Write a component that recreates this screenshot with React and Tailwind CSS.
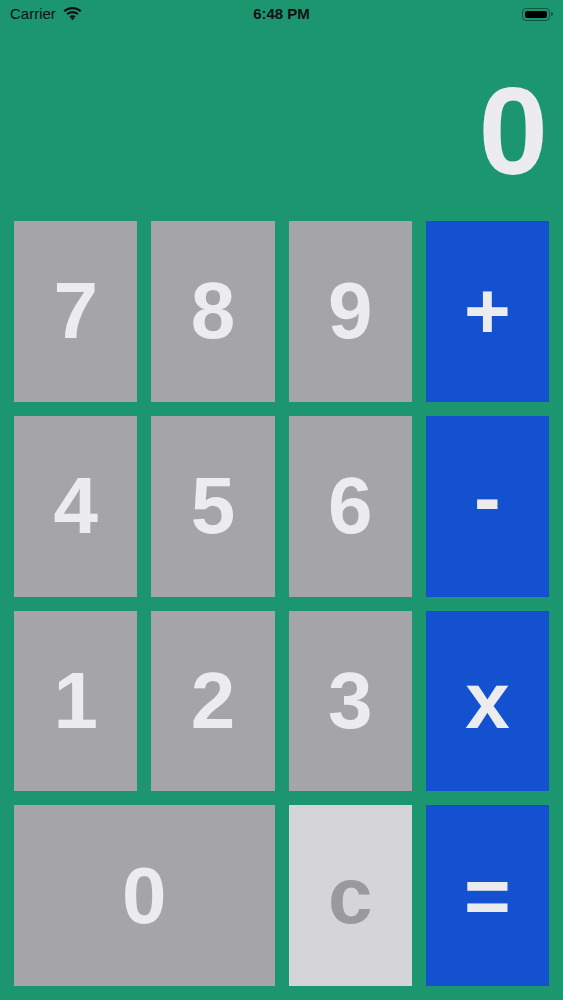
import React from 'react';

const FONT = { fontFamily: '"Liberation Sans", Arial, sans-serif' };

const KEYS = [
  { label: '7' }, { label: '8' }, { label: '9' }, { label: '+', op: true },
  { label: '4' }, { label: '5' }, { label: '6' }, { label: '-', op: true, lift: true },
  { label: '1' }, { label: '2' }, { label: '3' }, { label: 'x', op: true },
  { label: '0', wide: true }, { label: 'c', clear: true }, { label: '=', op: true },
];

const Wifi = () => (
  <svg width="19" height="14" viewBox="0 0 19 14" fill="#111">
    <path d="M9.5 2.2c2.9 0 5.5 1.1 7.5 2.9l1.5-1.6C16.1 1.3 12.9 0 9.5 0S2.9 1.3.5 3.5L2 5.1c2-1.8 4.6-2.9 7.5-2.9z" />
    <path d="M9.5 6.3c1.8 0 3.4.7 4.6 1.8l1.5-1.6C14 5 11.9 4.1 9.5 4.1S5 5 3.4 6.5l1.5 1.6c1.2-1.1 2.8-1.8 4.6-1.8z" />
    <path d="M9.5 10.3c.7 0 1.4.3 1.9.8L9.5 13.2 7.6 11.1c.5-.5 1.2-.8 1.9-.8z" />
    <path d="M9.5 8.2c1.2 0 2.3.5 3.1 1.2l-1.2 1.4a2.8 2.8 0 0 0-3.8 0L6.4 9.4c.8-.7 1.9-1.2 3.1-1.2z" />
  </svg>
);

const Battery = () => (
  <div className="flex items-center gap-[1px]">
    <div className="w-[28px] h-[13px] rounded-[4px] border border-[#0c5a42] p-[2px]">
      <div className="w-full h-full rounded-[2px] bg-black" />
    </div>
    <div className="w-[2px] h-[4px] rounded-r-sm bg-[#0c5a42]" />
  </div>
);

const Key = ({ k }) => {
  let cls = 'bg-[#a5a4a7] text-[#ececef]';
  if (k.op) cls = 'bg-[#1351d1] text-[#ececef]';
  if (k.clear) cls = 'bg-[#d5d5d8] text-[#9a999c]';
  return (
    <div
      className={`${cls} ${k.wide ? 'col-span-2' : ''} flex items-center justify-center text-[80px] font-bold leading-none`}
    >
      <span className={k.lift ? '-translate-y-[8px]' : ''}>{k.label}</span>
    </div>
  );
};

export default function App() {
  return (
    <div className="w-full h-[1000px] bg-[#1b966f] flex flex-col" style={FONT}>
      {/* status bar */}
      <div className="relative h-[28px] flex items-center justify-between px-[10px] text-[15px] text-[#111]">
        <div className="flex items-center gap-[7px]">
          <span>Carrier</span>
          <Wifi />
        </div>
        <span className="absolute left-1/2 -translate-x-1/2 font-bold text-[15px]">6:48 PM</span>
        <Battery />
      </div>

      {/* display */}
      <div className="flex-1 flex items-end justify-end pr-[15px] pb-[28px]">
        <span className="text-[125px] leading-none font-bold text-[#ececef]">0</span>
      </div>

      {/* keypad */}
      <div className="grid grid-cols-4 grid-rows-4 gap-[14px] px-[14px] pb-[14px] h-[779px]">
        {KEYS.map((k, i) => (
          <Key key={i} k={k} />
        ))}
      </div>
    </div>
  );
}
